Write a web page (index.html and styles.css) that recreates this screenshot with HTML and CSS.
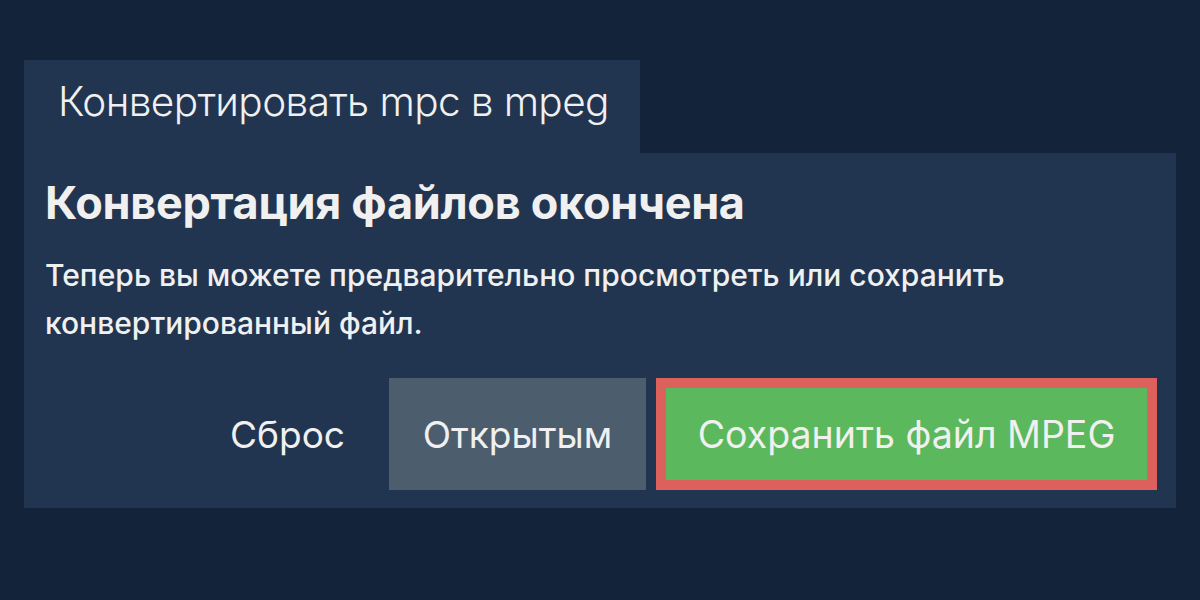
FILE: index.html
```html
<!DOCTYPE html>
<html lang="ru">
<head>
<meta charset="utf-8">
<link rel="stylesheet" href="styles.css">
</head>
<body>
<div class="wrap">
  <div class="tab">Конвертировать mpc в mpeg</div>
  <div class="card">
    <h1 class="title">Конвертация файлов окончена</h1>
    <p class="text">Теперь вы можете предварительно просмотреть или сохранить конвертированный файл.</p>
    <div class="actions">
      <span class="reset">Сброс</span>
      <span class="btn btn-open">Открытым</span>
      <span class="btn btn-save">Сохранить файл MPEG</span>
    </div>
  </div>
</div>
</body>
</html>
```

FILE: styles.css
```css
html, body {
  margin: 0;
  padding: 0;
  background: #13243a;
  width: 1200px;
  height: 600px;
  overflow: hidden;
  font-family: Inter, "Noto Sans", sans-serif;
  color: #f0f0f0;
}
.wrap {
  padding: 60px 24px 0 24px;
}
.tab {
  display: inline-block;
  width: 616px;
  height: 93px;
  box-sizing: border-box;
  background: #213550;
  padding: 0 0 0 34px;
  font-weight: 300;
  font-size: 40.5px;
  line-height: 84px;
  letter-spacing: -0.6px;
  vertical-align: top;
}
.card {
  background: #213550;
  height: 355px;
  box-sizing: border-box;
  padding: 23px 19px 0 21px;
}
.title {
  margin: 0;
  font-size: 45px;
  font-weight: 700;
  line-height: 54px;
  letter-spacing: -0.3px;
}
.text {
  margin: 21px 0 0 0;
  font-size: 30px;
  line-height: 48px;
  font-weight: 500;
}
.actions {
  display: flex;
  justify-content: flex-end;
  align-items: center;
  margin-top: 31px;
}
.reset {
  font-size: 37px;
  margin-right: 44px;
  font-weight: 400;
}
.btn {
  display: inline-flex;
  align-items: center;
  justify-content: center;
  height: 112px;
  box-sizing: border-box;
  font-size: 37px;
  font-weight: 400;
}
.btn-open {
  width: 257px;
  background: #4c5d6e;
  margin-right: 10px;
}
.btn-save {
  width: 501px;
  background: #5cb85c;
  border: 10px solid #dc605b;
  font-size: 37.5px;
}
```
